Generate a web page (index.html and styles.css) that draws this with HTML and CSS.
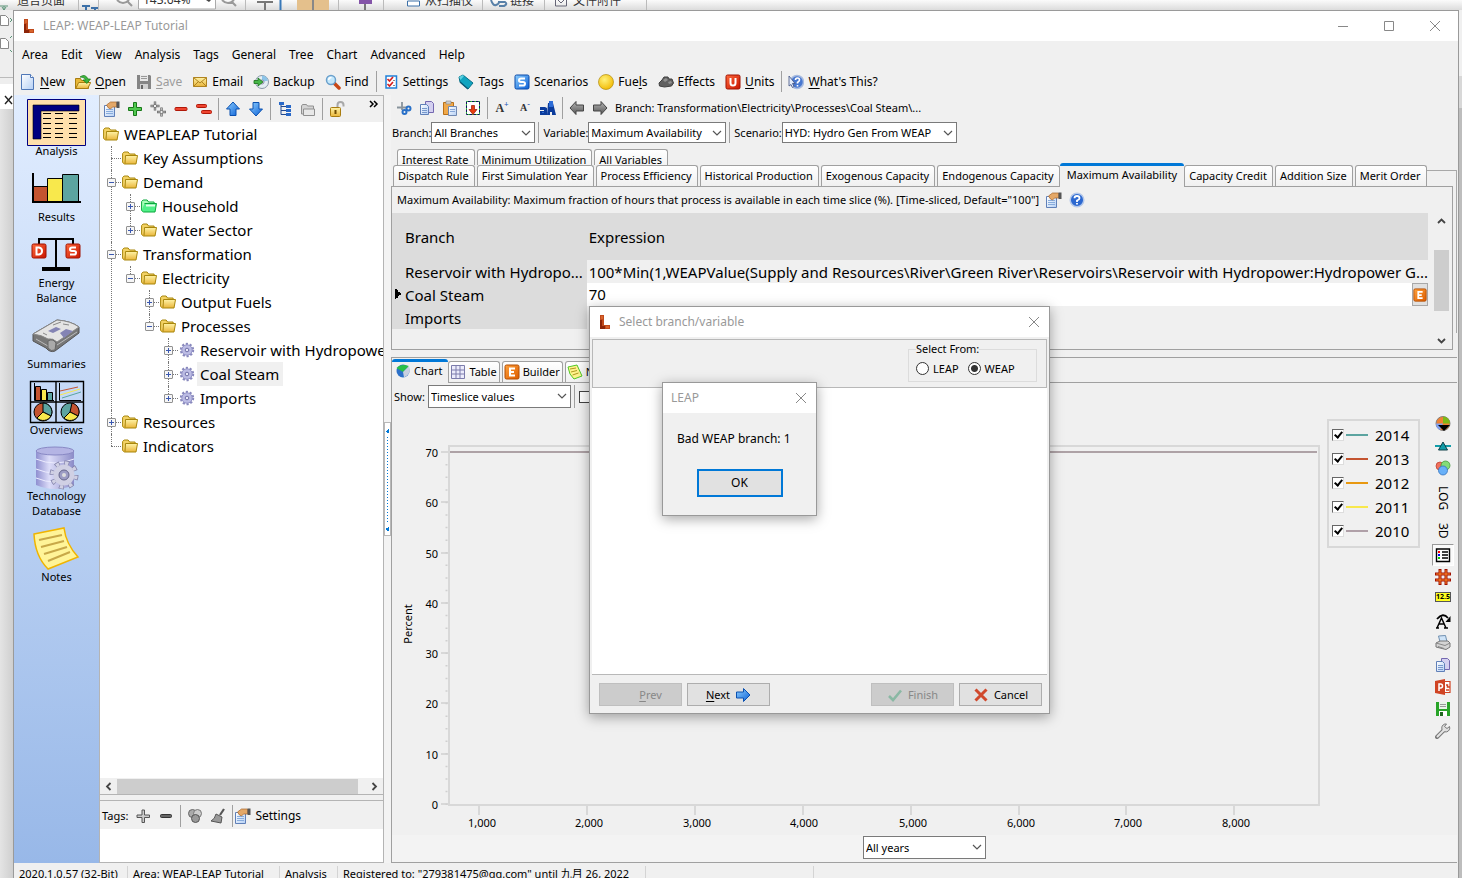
FILE: index.html
```html
<!DOCTYPE html>
<html lang="en">
<head>
    <meta charset="UTF-8">
    <meta name="viewport" content="width=device-width, initial-scale=1.0">
    <title>LEAP: WEAP-LEAP Tutorial</title>
    <link rel="stylesheet" href="styles.css">
</head>
<body>
    <!-- Icon sprite -->
    <svg class="sprite" aria-hidden="true">
        <defs>
            <linearGradient id="gold" x1="0" y1="0" x2="0" y2="1"><stop offset="0" stop-color="#fff3a6"/><stop offset="1" stop-color="#e9b53a"/></linearGradient>
            <linearGradient id="blue" x1="0" y1="0" x2="1" y2="1"><stop offset="0" stop-color="#8fd0ff"/><stop offset="1" stop-color="#0a5fd6"/></linearGradient>
            <linearGradient id="paper" x1="0" y1="0" x2="1" y2="1"><stop offset="0" stop-color="#fff"/><stop offset="1" stop-color="#b5d0f5"/></linearGradient>
            <linearGradient id="grey" x1="0" y1="0" x2="0" y2="1"><stop offset="0" stop-color="#b5b5b5"/><stop offset="1" stop-color="#555"/></linearGradient>
            <linearGradient id="red" x1="0" y1="0" x2="1" y2="1"><stop offset="0" stop-color="#ff6a3c"/><stop offset="1" stop-color="#c81400"/></linearGradient>
            <linearGradient id="orange" x1="0" y1="0" x2="1" y2="1"><stop offset="0" stop-color="#ffa23c"/><stop offset="1" stop-color="#dc5c00"/></linearGradient>
            <linearGradient id="lilac" x1="0" y1="0" x2="1" y2="0"><stop offset="0" stop-color="#8f8fd0"/><stop offset=".35" stop-color="#dcdcf8"/><stop offset="1" stop-color="#8c8cc8"/></linearGradient>
            <radialGradient id="sun" cx=".4" cy=".35" r=".7"><stop offset="0" stop-color="#fff27a"/><stop offset="1" stop-color="#f2b800"/></radialGradient>
        </defs>
        <symbol id="i-leap" viewBox="0 0 16 16"><path d="M3 1h4v10h6v4H3z" fill="#c04a1c"/><path d="M3 6h2v6h3v3H3z" fill="#8c2408"/><path d="M4 2h2v3H4zM9 12h3v2H9z" fill="#d8642c"/></symbol>
        <symbol id="i-new" viewBox="0 0 16 16"><path d="M1.500.5h9l3 3v12h-12z" fill="url(#paper)" stroke="#5078b8"/><path d="M10.500.5v3h3" fill="#fff" stroke="#5078b8"/></symbol>
        <symbol id="i-open" viewBox="0 0 16 16"><path d="M.5 14.500V4.500h5l1 2h7v8z" fill="#e8b838" stroke="#a87c10"/><path d="M.7 14.500l3-6h12l-3 6z" fill="url(#gold)" stroke="#a87c10"/><path d="M5 3q5-4 8 2h2.500L12 9.500 8 6h2.500Q9 2.500 5 3z" fill="#3cb43c" stroke="#147814" stroke-width=".7"/></symbol>
        <symbol id="i-save" viewBox="0 0 16 16"><path d="M1 1h13l1 1v13H1z" fill="#858585"/><path d="M4 1h8v6H4z" fill="#e8e8e8"/><path d="M5 2.500h6M5 4.500h6" stroke="#999"/><path d="M4 10h8v5H4z" fill="#d0d0d0"/><path d="M5 11h2v4H5z" fill="#666"/></symbol>
        <symbol id="i-email" viewBox="0 0 16 16"><path d="M1.500 3.500h13v9h-13z" fill="url(#gold)" stroke="#b08420"/><path d="M1.500 3.500L8 9l6.500-5.500M1.500 12.500l5-5M14.500 12.500l-5-5" fill="none" stroke="#b08420"/></symbol>
        <symbol id="i-backup" viewBox="0 0 16 16"><circle cx="9" cy="8" r="6.500" fill="#e4eef4" stroke="#8898a8"/><path d="M9 1.500a6.500 6.500 0 016 5L9 8z" fill="#8cc4e8"/><circle cx="9" cy="8" r="2" fill="#fff" stroke="#88a"/><path d="M1 6.500h4V4l5 4-5 4V9.500H1z" fill="#48b848" stroke="#187018" stroke-width=".8"/></symbol>
        <symbol id="i-find" viewBox="0 0 16 16"><path d="M9 9l5 5" stroke="#c84818" stroke-width="3.500" stroke-linecap="round"/><circle cx="6" cy="6" r="4.500" fill="#c4e8fc" stroke="#6aa0cc" stroke-width="1.500"/><path d="M3.500 6Q4 3.500 6.500 3.500" fill="none" stroke="#fff" stroke-width="1.300"/></symbol>
        <symbol id="i-settings" viewBox="0 0 16 16"><path d="M3 2h10.500v12H3z" fill="#fff" stroke="#2080d8" stroke-width="1.500"/><path d="M4.500 5L6.500 7 10 3M4.500 10l2 2L10 8" fill="none" stroke="#d82020" stroke-width="1.700"/><path d="M10 6.500h2M10 11.500h2" stroke="#888"/></symbol>
        <symbol id="i-tag" viewBox="0 0 16 16"><path d="M1 3l4-2 10 8-5 6L2 8z" fill="#10a4c0" stroke="#087088"/><path d="M1 3l4-2 1 1-3.500 4z" fill="#5cd0e0"/><path d="M2 8l8 7" stroke="#0c5c78" stroke-width="1.500"/></symbol>
        <symbol id="i-scen" viewBox="0 0 16 16"><rect x="1" y="1" width="14" height="14" rx="1.500" fill="url(#blue)" stroke="#0848a8"/><path d="M11 4.500H7Q5 4.500 5 6.200T7 8h2q2 0 2 1.800T9 11.500H5" fill="none" stroke="#fff" stroke-width="2"/></symbol>
        <symbol id="i-sun" viewBox="0 0 16 16"><circle cx="8" cy="8" r="7.500" fill="url(#sun)" stroke="#b08c10" stroke-width=".7"/></symbol>
        <symbol id="i-coal" viewBox="0 0 16 16"><path d="M1 9l3-3 2-3h4l1 2h3l1.500 4-2 3-7 1-5-1z" fill="#606060" stroke="#404040"/><path d="M5 6l3-2 2 2-3 2zM10 8l3-1 1 2-3 1z" fill="#909090"/></symbol>
        <symbol id="i-units" viewBox="0 0 16 16"><rect x="1" y="1" width="14" height="14" rx="1.500" fill="url(#red)" stroke="#a01000"/><path d="M5.500 4v5q0 2.500 2.500 2.500T10.500 9V4" fill="none" stroke="#fff" stroke-width="2"/></symbol>
        <symbol id="i-d" viewBox="0 0 16 16"><rect x="1" y="1" width="14" height="14" rx="1.500" fill="url(#red)" stroke="#a01000"/><path d="M5.500 4.500H8Q11 5 11 8t-3 3.500H5.500z" fill="none" stroke="#fff" stroke-width="2"/></symbol>
        <symbol id="i-s" viewBox="0 0 16 16"><rect x="1" y="1" width="14" height="14" rx="1.500" fill="url(#red)" stroke="#a01000"/><path d="M11 4.500H7Q5 4.500 5 6.200T7 8h2q2 0 2 1.800T9 11.500H5" fill="none" stroke="#fff" stroke-width="2"/></symbol>
        <symbol id="i-builder" viewBox="0 0 16 16"><rect x="1" y="1" width="14" height="14" rx="1.500" fill="url(#orange)" stroke="#b44c00"/><path d="M11 4.500H6v7h5M6 8h4" fill="none" stroke="#fff" stroke-width="2"/></symbol>
        <symbol id="i-what" viewBox="0 0 16 16"><circle cx="9" cy="8" r="6.500" fill="#4878d0" stroke="#a8bce0" stroke-width="1.500"/><path d="M7.500 6q0-2 2-2t2 2q0 1-2 2.500V9.500M9.500 11v1.500" fill="none" stroke="#fff" stroke-width="1.600"/><path d="M1 2v10l2-1.500 1.500 3 1.500-1L4.500 9.500H7z" fill="#e4ecfa" stroke="#405080" stroke-width=".8"/></symbol>
        <symbol id="i-help" viewBox="0 0 16 16"><circle cx="8" cy="8" r="6.800" fill="#2c68d0" stroke="#b4c8ea" stroke-width="1.500"/><path d="M5.500 6.200Q5.500 4 8 4t2.500 2.200Q10.500 7.500 8 8.500V10M8 11v1.500" fill="none" stroke="#fff" stroke-width="1.800"/></symbol>
        <symbol id="i-props" viewBox="0 0 16 16"><path d="M.5 4.500h10v11H.5z" fill="url(#paper)" stroke="#6080b8"/><path d="M2 8.500h7M2 10.500h7M2 12.500h7" stroke="#88acdc"/><path d="M2.500 4l4-3h6v5H8.500L6.500 8l-2-1z" fill="#e4a868" stroke="#a86428" stroke-width=".7"/><path d="M12.500.5h3v6.500h-3z" fill="#555"/></symbol>
        <symbol id="i-plus" viewBox="0 0 16 16"><path d="M6.500 1.500h3v5h5v3h-5v5h-3v-5h-5v-3h5z" fill="#50c850" stroke="#187818"/></symbol>
        <symbol id="i-plus2" viewBox="0 0 16 16"><path d="M5 .5v3.500M5 6v3.500M.5 5H4M6 5h3.500M11.500 6.500V10M11.500 12v3.500M7 11h3.500M12.500 11H16" stroke="#666" stroke-width="2.400"/><path d="M5 1v2.500M5 6.500V9M1 5h2.500M6.500 5H9M11.500 7v2.500M11.500 12.500V15M7.500 11H10M13 11h2.500" stroke="#ccc" stroke-width=".8"/></symbol>
        <symbol id="i-minus" viewBox="0 0 16 16"><rect x="2" y="6.500" width="12" height="3" rx="1" fill="#ee4430" stroke="#b01808"/></symbol>
        <symbol id="i-minus2" viewBox="0 0 16 16"><rect x=".5" y="3.500" width="10" height="3" rx="1" fill="#ee4430" stroke="#b01808"/><rect x="5.500" y="9.500" width="10" height="3" rx="1" fill="#ee4430" stroke="#b01808"/></symbol>
        <symbol id="i-up" viewBox="0 0 16 16"><path d="M8 1l6.500 7H11v6.500H5V8H1.500z" fill="url(#blue)" stroke="#0a50b0"/></symbol>
        <symbol id="i-down" viewBox="0 0 16 16"><path d="M8 15l6.500-7H11V1.500H5V8H1.500z" fill="url(#blue)" stroke="#0a50b0"/></symbol>
        <symbol id="i-next" viewBox="0 0 16 16"><path d="M15 8L8.500 1.500V5h-7v6h7v3.500z" fill="url(#blue)" stroke="#0a50b0"/></symbol>
        <symbol id="i-tree" viewBox="0 0 16 16"><path d="M4 4v9.500h5M4 9.500h5M4 5.500h5" fill="none" stroke="#204890"/><path d="M2 1h5v3H2zM9 4h5v3H9zM9 8h5v3H9zM9 12h5v3H9z" fill="#2868c8"/></symbol>
        <symbol id="i-gfold" viewBox="0 0 16 16"><path d="M1.500 13V5l1-1.500h4l1 1.500h6v8z" fill="#d4d4d4" stroke="#909090"/><path d="M3.500 14.500V8h11v6.500z" fill="#e8e8e8" stroke="#909090"/></symbol>
        <symbol id="i-lock" viewBox="0 0 16 16"><path d="M8.500 7V4q0-3 3-3t3 3v1.500" fill="none" stroke="#a8a8a8" stroke-width="2"/><rect x="1.500" y="6.500" width="10" height="9" rx="1" fill="url(#gold)" stroke="#a87c10"/><path d="M6.500 9v4" stroke="#704c00" stroke-width="2"/></symbol>
        <symbol id="i-folder" viewBox="0 0 16 16"><path d="M.6 12.500V3.500l1.500-1.500h4l1.500 2h5.500v9" fill="#f3d264" stroke="#a8860c"/><path d="M3.500 5.500h12L14 14H2.500L.6 12.500" fill="url(#gold)" stroke="#a8860c"/><path d="M3.500 5.500L3 13.500" stroke="#a8860c"/></symbol>
        <symbol id="i-gfolder" viewBox="0 0 16 16"><path d="M.6 12.500V3.500l1.500-1.500h4l1.500 2h5.500v9" fill="#a8ffb8" stroke="#0aa83c"/><path d="M3.500 5.500h12L14 14H2.500L.6 12.500" fill="#50f088" stroke="#0aa83c"/><path d="M5 7.500h9" stroke="#e0ffe8" stroke-width="2"/></symbol>
        <symbol id="i-gear" viewBox="0 0 16 16"><circle cx="8" cy="8" r="6" fill="none" stroke="#8888bc" stroke-width="2.400" stroke-dasharray="2.100 1.670"/><circle cx="8" cy="8" r="5.200" fill="#bcbce4" stroke="#9494c8"/><circle cx="8" cy="8" r="1.800" fill="#e8e8f8" stroke="#7070a8"/></symbol>
        <symbol id="i-cut" viewBox="0 0 16 16"><path d="M1 7.500h9M6 2v8" stroke="#88939c" stroke-width="1.800"/><circle cx="12.500" cy="8.500" r="2" fill="none" stroke="#2870c8" stroke-width="2"/><circle cx="8.500" cy="12" r="2" fill="none" stroke="#2870c8" stroke-width="2"/></symbol>
        <symbol id="i-copy" viewBox="0 0 16 16"><path d="M6.500 1.500h6l2 2v9h-8z" fill="#d4d0f0" stroke="#7468b0"/><path d="M1.500 4.500h6l2 2v8h-8z" fill="url(#paper)" stroke="#6080b8"/><path d="M3 8.500h5M3 10.500h5M3 12.500h5" stroke="#7898cc"/></symbol>
        <symbol id="i-paste" viewBox="0 0 16 16"><path d="M1.500 2.500h10v12h-10z" fill="#f0a848" stroke="#b87018"/><path d="M4 1h5v3H4z" fill="#ccc" stroke="#888" stroke-width=".6"/><path d="M6.500 6.500h8v9h-8z" fill="url(#paper)" stroke="#7088b0"/><path d="M8 9.500h5M8 11.500h5" stroke="#88a8d8"/></symbol>
        <symbol id="i-import" viewBox="0 0 16 16"><path d="M1.500 1.500h13v13h-13z" fill="#fff" stroke="#101060"/><path d="M1.500 1.500h13v13h-13z" fill="none" stroke="#30c830" stroke-dasharray="1.500 2.500"/><path d="M6.500 5.500h3v4H12l-4 5-4-5h2.500z" fill="#e83c10" stroke="#901800" stroke-width=".7"/></symbol>
        <symbol id="i-left" viewBox="0 0 16 16"><path d="M1 8l6-6.500V5h7.500v6H7v3.500z" fill="url(#grey)" stroke="#444"/></symbol>
        <symbol id="i-right" viewBox="0 0 16 16"><path d="M15 8L9 1.500V5H1.500v6H9v3.500z" fill="url(#grey)" stroke="#444"/></symbol>
        <symbol id="i-gplus" viewBox="0 0 16 16"><path d="M7 2h2.500v5h5v2.500h-5v5H7v-5H2V7h5z" fill="#ccc" stroke="#555"/></symbol>
        <symbol id="i-gminus" viewBox="0 0 16 16"><rect x="2.500" y="6.500" width="11" height="3" rx="1" fill="#666" stroke="#333"/></symbol>
        <symbol id="i-blob" viewBox="0 0 16 16"><circle cx="5.500" cy="5.500" r="4" fill="#aaa" stroke="#666"/><circle cx="10.500" cy="5.500" r="4" fill="#ccc" stroke="#777"/><circle cx="8.500" cy="10.500" r="4" fill="#999" stroke="#555"/></symbol>
        <symbol id="i-broom" viewBox="0 0 16 16"><path d="M14 1l-4 6" stroke="#555" stroke-width="2.200"/><path d="M6 6l6 3-1 6-10-2q4-2 5-7z" fill="#999" stroke="#555"/></symbol>
        <symbol id="i-chart" viewBox="0 0 16 16"><circle cx="8" cy="8" r="6.500" fill="#2c70c8"/><path d="M8 9L1.500 5Q6 0 14 3z" fill="#28c048"/><path d="M8 9l6-6q3 8-5 11.500z" fill="#c8d0e0"/></symbol>
        <symbol id="i-table" viewBox="0 0 16 16"><path d="M1.500 1.500h13v13h-13zM1.500 6h13M1.500 10h13M6 1.500v13M10 1.500v13" fill="#ececfc" stroke="#7c7cac"/></symbol>
        <symbol id="i-note" viewBox="0 0 16 16"><path d="M1 3l9-2 5 11-8 3Q2 11 1 3z" fill="#fff48c" stroke="#50c828"/><path d="M3 5l6-1M4 8l6-1.500M5.500 11l6-2" stroke="#b09820"/></symbol>
        <symbol id="i-pie" viewBox="0 0 16 16"><circle cx="8" cy="7.500" r="7" fill="#f08030" stroke="#808080"/><path d="M8 7.500V.5a7 7 0 017 7z" fill="#7cb818"/><path d="M8 7.500H1a7 7 0 004 6.500z" fill="#80a0f0"/><path d="M3 9h12l-6 6z" fill="#000"/></symbol>
        <symbol id="i-base" viewBox="0 0 16 16"><path d="M0 8h16" stroke="#109ca8" stroke-width="2"/><path d="M8 4l4.500 8h-9z" fill="#109ca8" stroke="#104048"/></symbol>
        <symbol id="i-color" viewBox="0 0 16 16"><circle cx="5" cy="6" r="4" fill="#f0705c" stroke="#b83828" stroke-width=".7"/><circle cx="10.500" cy="5.500" r="4.500" fill="#84dc78" stroke="#389030" stroke-width=".7"/><circle cx="8" cy="10.500" r="4.500" fill="#68b0f8" stroke="#2868b8" stroke-width=".7"/></symbol>
        <symbol id="i-legend" viewBox="0 0 16 16"><path d="M1.500 2h13v12.500h-13z" fill="#fff" stroke="#000" stroke-width="1.400"/><path d="M7 5h6M7 8h6M7 11h6" stroke="#000" stroke-width="1.500"/><path d="M3 4h2v2H3z" fill="red"/><path d="M3 7h2v2H3z" fill="#00f"/><path d="M3 10h2v2H3z" fill="#0c0"/></symbol>
        <symbol id="i-grid" viewBox="0 0 16 16"><path d="M5 0v16M11 0v16M0 5h16M0 11h16" stroke="#a01000" stroke-width="3"/><path d="M5 1v14M11 1v14M1 5h14M1 11h14" stroke="#ff8828"/></symbol>
        <symbol id="i-rotA" viewBox="0 0 16 16"><path d="M2 15L6.500 5 11 15M4 11h5M1 15h3M9 15h4" stroke="#000" stroke-width="1.500" fill="none"/><path d="M2 6Q8-1 13 5" fill="none" stroke="#000" stroke-width="1.800"/><path d="M15.500 3v6h-5z"/></symbol>
        <symbol id="i-print" viewBox="0 0 16 16"><path d="M3.500 1l7-.5L12 7H5z" fill="#cfe4f8" stroke="#7090b0"/><path d="M1 8l4-2h8l2 2v4l-4 2.500L1 12z" fill="#d4d4d4" stroke="#777"/><path d="M1 8l9 2.500L15 8M3 11.500l6 2" fill="none" stroke="#888"/></symbol>
        <symbol id="i-ppt" viewBox="0 0 16 16"><path d="M0 2l10-2v16L0 14z" fill="#d04424"/><path d="M10 2.500h5v11h-5" fill="#fff" stroke="#d04424" stroke-width="1.200"/><path d="M4 12V5h1.500Q7.500 5 7.500 7T5.500 9H4" fill="none" stroke="#fff" stroke-width="1.500"/><path d="M11 6h1.500v2H15M11 11h3" fill="none" stroke="#d04424" stroke-width="1.500"/></symbol>
        <symbol id="i-gsave" viewBox="0 0 16 16"><path d="M1 1h14v14H1z" fill="#28a428"/><path d="M4 1h8v7H4z" fill="#e8f4e8"/><path d="M5 3.500h6M5 5.500h6" stroke="#999"/><path d="M4 10h8v5H4z" fill="#fff"/><path d="M5 11h3v4H5z" fill="#206820"/></symbol>
        <symbol id="i-wrench" viewBox="0 0 16 16"><path d="M2 14L9 7" stroke="#777" stroke-width="4" stroke-linecap="round"/><path d="M14.500 3.500a4 4 0 11-3-2.500L9.500 3.500l2.500 2z" fill="#ddd" stroke="#777"/><path d="M2.500 13.500L9 7" stroke="#e4e4e4" stroke-width="2" stroke-linecap="round"/></symbol>
        <symbol id="i-check" viewBox="0 0 16 16"><path d="M2 9l4 4L14 3.500" fill="none" stroke="#8ab8a4" stroke-width="2.600"/></symbol>
        <symbol id="i-x" viewBox="0 0 16 16"><path d="M2.500 2.500l11 11M13.500 2.500l-11 11" stroke="#d0482c" stroke-width="3"/></symbol>
        <symbol id="i-face" viewBox="0 0 16 16"><path d="M0 7h5l2 1v7H0v-4h4v-1H0zM8 3h5l3 12h-4v-3h-2v3H7z" fill="#0c3c9c"/><path d="M9 1h4v6H9zM2 12h2v1H2z" fill="#2c6cd8"/></symbol>
        <symbol id="i-close" viewBox="0 0 16 16"><path d="M3 3l10 10M13 3L3 13" stroke="#888" fill="none"/></symbol>
        <symbol id="i-chev" viewBox="0 0 10 10"><path d="M1 3l4 4 4-4" fill="none" stroke="#555" stroke-width="1.200"/></symbol>
    </svg>

    <!-- Window behind -->
    <div class="back-top">
        <svg width="660" height="10">
            <path d="M0 6h8M4 6v4M2 7l2 3 2-3" stroke="#5a9478" fill="none"/>
            <text x="17" y="5" class="back-text">适合页面</text>
            <path d="M78.500 0v10M98.500 0v10M245.500 0v10M338.500 0v10M383.500 0v10M482.500 0v10M544.500 0v10M646.500 0v10" stroke="#bbb"/>
            <path d="M82 6h8M86 6v4M91 8h7M95 8v2" stroke="#3c70a8" stroke-width="2"/>
            <path d="M117 0q6 6 12 0M128 2l4 4M222 0q6 6 12 0M232 2l4 4" stroke="#999" stroke-width="2" fill="none"/>
            <path d="M138.500 0v9h77V0" fill="#fff" stroke="#aaa"/>
            <text x="143" y="4" class="back-text">143.64%</text>
            <path d="M206 0h5l-2 2z" fill="#444"/>
            <path d="M257 2h16M265 2v8" stroke="#777" stroke-width="2"/>
            <path d="M280.500 0v10" stroke="#3878b8" stroke-width="2"/>
            <path d="M297 0h32v10h-32z" fill="#e4c08c"/>
            <path d="M313 0v10" stroke="#888" stroke-width="2"/>
            <path d="M359 0h13v4h-13z" fill="#8454a8"/>
            <path d="M365 4v6" stroke="#777" stroke-width="2"/>
            <path d="M407.500 2v-1h12v5h-12z" fill="#fff" stroke="#3c70a8"/>
            <text x="425" y="5" class="back-text">从扫描仪</text>
            <path d="M491 0q2 6 5 5t3-3h6q3 2-1 4h-5" fill="none" stroke="#5880a8" stroke-width="2"/>
            <text x="510" y="5" class="back-text">链接</text>
            <path d="M555.500 0v6h11V0M558 0l3 3 3-3" fill="none" stroke="#667"/>
            <text x="573" y="5" class="back-text">文件附件</text>
        </svg>
    </div>

    <div class="desk">
        <div class="back-left">
            <svg width="13" height="74"><path d="M.5 5.500h5l3 3v7h-8zM.5 28.500h5l3 3v7h-8z" fill="#fff" stroke="#888"/><path d="M10 8l2 2-2 2M10 28l2-2M10 40l2 2" stroke="#5a9478" fill="none"/><path d="M0 67.500h13" stroke="#bbb"/></svg>
            <span class="back-x"><svg class="ico"><path d="M5 6l7 8M12 6l-7 8" stroke="#222" stroke-width="1.400"/></svg></span>
        </div>

        <div class="window">
            <header class="titlebar">
                <svg class="ico"><use href="#i-leap"/></svg>
                <span class="title">LEAP: WEAP-LEAP Tutorial</span>
                <button class="cap" aria-label="Minimize"><svg class="ico" viewBox="0 0 16 16"><path d="M3 8.500h10" stroke="#888"/></svg></button>
                <button class="cap" aria-label="Maximize"><svg class="ico" viewBox="0 0 16 16"><path d="M3.500 3.500h9v9h-9z" fill="none" stroke="#888"/></svg></button>
                <button class="cap" aria-label="Close"><svg class="ico"><use href="#i-close"/></svg></button>
            </header>

            <nav class="menu">
                <button>Area</button><button>Edit</button><button>View</button><button>Analysis</button><button>Tags</button><button>General</button><button>Tree</button><button>Chart</button><button>Advanced</button><button>Help</button>
            </nav>

            <div class="toolbar">
                <button><svg class="ico"><use href="#i-new"/></svg><span><u>N</u>ew</span></button>
                <button><svg class="ico"><use href="#i-open"/></svg><span><u>O</u>pen</span></button>
                <button disabled><svg class="ico"><use href="#i-save"/></svg><span><u>S</u>ave</span></button>
                <button><svg class="ico"><use href="#i-email"/></svg>Email</button>
                <button><svg class="ico"><use href="#i-backup"/></svg>Backup</button>
                <button><svg class="ico"><use href="#i-find"/></svg>Find</button>
                <i class="sep"></i>
                <button><svg class="ico"><use href="#i-settings"/></svg>Settings</button>
                <button><svg class="ico"><use href="#i-tag"/></svg>Tags</button>
                <button><svg class="ico"><use href="#i-scen"/></svg>Scenarios</button>
                <button><svg class="ico"><use href="#i-sun"/></svg><span>Fue<u>l</u>s</span></button>
                <button><svg class="ico"><use href="#i-coal"/></svg>Effects</button>
                <button><svg class="ico"><use href="#i-units"/></svg><span><u>U</u>nits</span></button>
                <i class="sep"></i>
                <button><svg class="ico"><use href="#i-what"/></svg><span><u>W</u>hat's This?</span></button>
            </div>

            <div class="work">
                <aside class="views">
                    <button class="view">
                        <svg viewBox="0 0 59 48"><path d="M.5 1.500h58v46H.5z" fill="#ffe0ac" stroke="#000080"/><path d="M6 7h46v6H14v28H6z" fill="#000080" stroke="#000" stroke-width=".6"/><path d="M16 15.500h8M28 15.500h8M42 15.500h8M16 20.500h8M28 20.500h8M42 20.500h8M16 25.500h8M28 25.500h8M42 25.500h8M16 30.500h8M28 30.500h8M42 30.500h8M16 35.500h8M28 35.500h8M42 35.500h8M16 39.500h8M28 39.500h8M42 39.500h8" stroke="#000"/></svg>
                        Analysis
                    </button>
                    <button class="view">
                        <svg viewBox="0 0 59 48"><path d="M6.500 22.500h14v15h-14z" fill="#c45430" stroke="#000"/><path d="M20.500 14.500h15v23h-15z" fill="#f8e84c" stroke="#000"/><path d="M35.500 10.500h16v27h-16z" fill="#5ca4a0" stroke="#000"/><path d="M6 9v29h48" fill="none" stroke="#000" stroke-width="2"/></svg>
                        Results
                    </button>
                    <button class="view">
                        <svg viewBox="0 0 59 48"><path d="M12 14V9h34v5M29 9v29" fill="none" stroke="#000" stroke-width="2"/><path d="M15 37h28v4H15z"/><use href="#i-d" x="4" y="13" width="16" height="16"/><use href="#i-s" x="38" y="13" width="16" height="16"/></svg>
                        Energy<br>Balance
                    </button>
                    <button class="view">
                        <svg viewBox="0 0 59 48"><path d="M6 23L30 9q14 1 22 7v6L28 40q-5 2-9-3L6 30z" fill="#777" stroke="#555"/><path d="M6 23L30 9q14 1 22 7L30 31q-4-4-9-3-6-4-15-5z" fill="#e4e4e4" stroke="#888"/><path d="M9 28l12 7M30 34l20-13" fill="none" stroke="#bbb"/><path d="M21 30q5-3 8 2l-1 7q-4 2-7-2z" fill="#aaa" stroke="#666"/><path d="M21 20l8-4 5 2-8 4zM33 22l6-4 7 2-9 7z" fill="#8484b4"/><path d="M26 14l8-3M36 13l6 1M16 22l4 2" stroke="#888"/></svg>
                        Summaries
                    </button>
                    <button class="view">
                        <svg viewBox="0 0 59 48"><path d="M3.500 4.500h53v41h-53zM3.500 25h53M29 4.500v41" fill="none" stroke="#000" stroke-width="1.400"/><path d="M8.500 9.500h5v14h-5z" fill="#c45430" stroke="#000"/><path d="M14.500 12.500h5v11h-5z" fill="#f8e84c" stroke="#000"/><path d="M20.500 15.500h5v8h-5z" fill="#5ca4a0" stroke="#000"/><path d="M7.500 6v17.500H27M32.500 6v17.500H54" fill="none" stroke="#000"/><path d="M33 14l18-4" stroke="#c45430"/><path d="M33 18l20-6" stroke="#f8e84c"/><path d="M35 21l19-6" stroke="#5ca4a0"/><circle cx="16" cy="35" r="9" fill="#c45430" stroke="#000"/><path d="M16 35V26a9 9 0 018 13z" fill="#5ca4a0" stroke="#000"/><path d="M16 35l8 4a9 9 0 01-14 2z" fill="#f8e84c" stroke="#000"/><circle cx="43" cy="35" r="9" fill="#5ca4a0" stroke="#000"/><path d="M43 35l2-9a9 9 0 016 13z" fill="#c45430" stroke="#000"/><path d="M43 35l8 4a9 9 0 01-14 2z" fill="#f8e84c" stroke="#000"/></svg>
                        Overviews
                    </button>
                    <button class="view">
                        <svg viewBox="0 0 59 48"><path d="M9 8v34q19 8 38 0V8z" fill="url(#lilac)"/><ellipse cx="28" cy="8" rx="19" ry="4" fill="#b4b4e4" stroke="#8888c4"/><path d="M9 16q19 8 38 0M9 26q19 8 38 0M9 35q19 8 38 0" fill="none" stroke="#ececff"/><circle cx="37" cy="32" r="12" fill="none" stroke="#8080a8" stroke-width="5" stroke-dasharray="4.700 4.720"/><circle cx="37" cy="32" r="12" fill="none" stroke="#d0d0e4" stroke-width="3.400" stroke-dasharray="3.400 6.020" stroke-dashoffset="-.65"/><circle cx="37" cy="32" r="10.500" fill="#d0d0e4"/><circle cx="37" cy="32" r="5" fill="#9c9cc4" stroke="#66668c"/><circle cx="37" cy="32" r="2" fill="#ddd"/></svg>
                        Technology<br>Database
                    </button>
                    <button class="view">
                        <svg viewBox="0 0 59 48"><path d="M7 10L37 4q2 16 14 29L21 45Q8 32 7 10z" fill="#fff498" stroke="#f0b400" stroke-width="1.500"/><path d="M12 16l23-5M14 23l23-6M17 30l23-7M21 37l22-9" stroke="#c8a848" stroke-width="2"/></svg>
                        Notes
                    </button>
                </aside>

                <section class="branches">
                    <div class="iconbar">
                        <button aria-label="Properties"><svg class="ico"><use href="#i-props"/></svg></button>
                        <button aria-label="Add"><svg class="ico"><use href="#i-plus"/></svg></button>
                        <button aria-label="Add multiple"><svg class="ico"><use href="#i-plus2"/></svg></button>
                        <button aria-label="Delete"><svg class="ico"><use href="#i-minus"/></svg></button>
                        <button aria-label="Delete multiple"><svg class="ico"><use href="#i-minus2"/></svg></button>
                        <i class="sep"></i>
                        <button aria-label="Move up"><svg class="ico"><use href="#i-up"/></svg></button>
                        <button aria-label="Move down"><svg class="ico"><use href="#i-down"/></svg></button>
                        <i class="sep"></i>
                        <button aria-label="Outline"><svg class="ico"><use href="#i-tree"/></svg></button>
                        <button aria-label="Group"><svg class="ico"><use href="#i-gfold"/></svg></button>
                        <i class="sep"></i>
                        <button aria-label="Lock"><svg class="ico"><use href="#i-lock"/></svg></button>
                        <button class="more" aria-label="More"><svg width="10" height="8"><path d="M1 1l3 3-3 3M5 1l3 3-3 3" fill="none" stroke="#000" stroke-width="1.500"/></svg></button>
                    </div>

                    <div class="tree">
                        <div class="node"><svg class="ico"><use href="#i-folder"/></svg><span>WEAPLEAP Tutorial</span></div>
                        <ul class="top">
                            <li><div class="node"><i class="leaf"></i><svg class="ico"><use href="#i-folder"/></svg><span>Key Assumptions</span></div></li>
                            <li><div class="node"><i class="box"></i><svg class="ico"><use href="#i-folder"/></svg><span>Demand</span></div>
                                <ul>
                                    <li><div class="node"><i class="box closed"></i><svg class="ico"><use href="#i-gfolder"/></svg><span>Household</span></div></li>
                                    <li><div class="node"><i class="box closed"></i><svg class="ico"><use href="#i-folder"/></svg><span>Water Sector</span></div></li>
                                </ul>
                            </li>
                            <li><div class="node"><i class="box"></i><svg class="ico"><use href="#i-folder"/></svg><span>Transformation</span></div>
                                <ul>
                                    <li><div class="node"><i class="box"></i><svg class="ico"><use href="#i-folder"/></svg><span>Electricity</span></div>
                                        <ul>
                                            <li><div class="node"><i class="box closed"></i><svg class="ico"><use href="#i-folder"/></svg><span>Output Fuels</span></div></li>
                                            <li><div class="node"><i class="box"></i><svg class="ico"><use href="#i-folder"/></svg><span>Processes</span></div>
                                                <ul>
                                                    <li><div class="node"><i class="box closed"></i><svg class="ico"><use href="#i-gear"/></svg><span>Reservoir with Hydropower</span></div></li>
                                                    <li><div class="node"><i class="box closed"></i><svg class="ico"><use href="#i-gear"/></svg><span class="current">Coal Steam</span></div></li>
                                                    <li><div class="node"><i class="box closed"></i><svg class="ico"><use href="#i-gear"/></svg><span>Imports</span></div></li>
                                                </ul>
                                            </li>
                                        </ul>
                                    </li>
                                </ul>
                            </li>
                            <li><div class="node"><i class="box closed"></i><svg class="ico"><use href="#i-folder"/></svg><span>Resources</span></div></li>
                            <li><div class="node"><i class="leaf"></i><svg class="ico"><use href="#i-folder"/></svg><span>Indicators</span></div></li>
                        </ul>
                    </div>
                    <div class="hscroll">
                        <svg width="17" height="17"><path d="M10.500 5L7 8.500l3.500 3.500" fill="none" stroke="#444" stroke-width="1.800"/></svg>
                        <div class="hthumb"></div>
                        <svg width="17" height="17"><path d="M6.500 5L10 8.500 6.500 12" fill="none" stroke="#444" stroke-width="1.800"/></svg>
                    </div>
                    <div class="tagbar">
                        <span>Tags:</span>
                        <button aria-label="Add tag"><svg class="ico"><use href="#i-gplus"/></svg></button>
                        <button aria-label="Remove tag"><svg class="ico"><use href="#i-gminus"/></svg></button>
                        <i class="sep"></i>
                        <button aria-label="Colors"><svg class="ico"><use href="#i-blob"/></svg></button>
                        <button aria-label="Clear"><svg class="ico"><use href="#i-broom"/></svg></button>
                        <i class="sep"></i>
                        <button class="wide"><svg class="ico"><use href="#i-props"/></svg>Settings</button>
                    </div>
                    <div class="taglist"></div>
                </section>

                <div class="splitter">
                    <div class="grip"></div>
                </div>

                <main class="main">
                    <div class="iconbar">
                        <button aria-label="Cut"><svg class="ico"><use href="#i-cut"/></svg></button>
                        <button aria-label="Copy"><svg class="ico"><use href="#i-copy"/></svg></button>
                        <button aria-label="Paste"><svg class="ico"><use href="#i-paste"/></svg></button>
                        <button aria-label="Import"><svg class="ico"><use href="#i-import"/></svg></button>
                        <i class="sep"></i>
                        <button class="serif" aria-label="Larger">A<sup>+</sup></button>
                        <button class="serif small" aria-label="Smaller">A<sup>-</sup></button>
                        <button aria-label="Font"><svg class="ico"><use href="#i-face"/></svg></button>
                        <i class="sep"></i>
                        <button aria-label="Back"><svg class="ico"><use href="#i-left"/></svg></button>
                        <button aria-label="Forward"><svg class="ico"><use href="#i-right"/></svg></button>
                        <span class="path">Branch: Transformation\Electricity\Processes\Coal Steam\...</span>
                    </div>

                    <div class="filters">
                        <label for="branch">Branch:</label>
                        <span class="combo w-branch"><select id="branch"><option>All Branches</option></select><svg><use href="#i-chev"/></svg></span>
                        <i class="sep"></i>
                        <label for="variable">Variable:</label>
                        <span class="combo w-variable"><select id="variable"><option>Maximum Availability</option></select><svg><use href="#i-chev"/></svg></span>
                        <i class="sep"></i>
                        <label for="scenario">Scenario:</label>
                        <span class="combo w-scenario"><select id="scenario"><option>HYD: Hydro Gen From WEAP</option></select><svg><use href="#i-chev"/></svg></span>
                    </div>

                    <div class="variables">
                        <div class="tabs back">
                            <button>Interest Rate</button><button>Minimum Utilization</button><button>All Variables</button>
                        </div>
                        <div class="tabs">
                            <button>Dispatch Rule</button><button>First Simulation Year</button><button>Process Efficiency</button><button>Historical Production</button><button>Exogenous Capacity</button><button>Endogenous Capacity</button><button class="active">Maximum Availability</button><button>Capacity Credit</button><button>Addition Size</button><button>Merit Order</button>
                        </div>
                        <div class="pane">
                            <p class="hint">Maximum Availability: Maximum fraction of hours that process is available in each time slice (%). [Time-sliced, Default="100"]
                                <svg class="ico"><use href="#i-props"/></svg>
                                <svg class="ico"><use href="#i-help"/></svg>
                            </p>
                            <div class="sheet">
                                <table>
                                    <thead>
                                        <tr><th class="c-branch">Branch</th><th>Expression</th></tr>
                                    </thead>
                                    <tbody>
                                        <tr><th>Reservoir with Hydropo...</th><td>100*Min(1,WEAPValue(Supply and Resources\River\Green River\Reservoirs\Reservoir with Hydropower:Hydropower G...</td></tr>
                                        <tr class="editing"><th>Coal Steam</th><td><div class="cell">70<button class="build" aria-label="Expression builder"><svg class="ico"><use href="#i-builder"/></svg></button></div></td></tr>
                                        <tr><th>Imports</th><td></td></tr>
                                    </tbody>
                                </table>
                                <div class="vscroll">
                                    <svg width="15" height="17"><path d="M4 10l3.500-3.500L11 10" fill="none" stroke="#444" stroke-width="1.800"/></svg>
                                    <div class="vthumb"></div>
                                    <svg width="15" height="17"><path d="M4 7l3.500 3.500L11 7" fill="none" stroke="#444" stroke-width="1.800"/></svg>
                                </div>
                            </div>
                        </div>
                    </div>

                    <section class="output">
                        <div class="tabs low">
                            <button class="active"><svg class="ico"><use href="#i-chart"/></svg>Chart</button><button><svg class="ico"><use href="#i-table"/></svg>Table</button><button><svg class="ico"><use href="#i-builder"/></svg>Builder</button><button><svg class="ico"><use href="#i-note"/></svg>Notes</button>
                        </div>
                        <div class="show">
                            <label for="show">Show:</label>
                            <span class="combo w-show"><select id="show"><option>Timeslice values</option></select><svg><use href="#i-chev"/></svg></span>
                            <i class="sep"></i>
                            <input type="checkbox" class="tick" aria-label="Chart option">
                        </div>
                        <div class="plot">
                            <svg class="chart" width="930" height="425" viewBox="0 0 930 425">
                                <path d="M57 36h870v359H57z" fill="none" stroke="#d8d8d8" stroke-width="2"/>
                                <path d="M58 42h867" stroke="#aea2a6" stroke-width="2"/>
                                <path d="M49 42h7M49 92h7M49 143h7M49 193h7M49 243h7M49 293h7M49 344h7M49 394h7M87 396v9M195 396v9M303 396v9M411 396v9M519 396v9M627 396v9M734 396v9M842 396v9" stroke="#d8d8d8" stroke-width="2"/>
                                <path d="M54.500 54v341" fill="none" stroke="#d0d0d0" stroke-width="2" stroke-dasharray="1.500 11.070"/>
                                <g class="ylab"><text x="46" y="47">70</text><text x="46" y="97">60</text><text x="46" y="148">50</text><text x="46" y="198">40</text><text x="46" y="248">30</text><text x="46" y="298">20</text><text x="46" y="349">10</text><text x="46" y="399">0</text></g>
                                <g class="xlab"><text x="90" y="417">1,000</text><text x="197" y="417">2,000</text><text x="305" y="417">3,000</text><text x="412" y="417">4,000</text><text x="521" y="417">5,000</text><text x="629" y="417">6,000</text><text x="736" y="417">7,000</text><text x="844" y="417">8,000</text></g>
                                <text class="xlab" transform="translate(20 214) rotate(-90)">Percent</text>
                            </svg>
                            <div class="legend">
                                <label><input type="checkbox" class="tick" checked><i class="y2014"></i>2014</label>
                                <label><input type="checkbox" class="tick" checked><i class="y2013"></i>2013</label>
                                <label><input type="checkbox" class="tick" checked><i class="y2012"></i>2012</label>
                                <label><input type="checkbox" class="tick" checked><i class="y2011"></i>2011</label>
                                <label><input type="checkbox" class="tick" checked><i class="y2010"></i>2010</label>
                            </div>
                            <div class="tools">
                                <button aria-label="Chart type"><svg class="ico"><use href="#i-pie"/></svg></button>
                                <button aria-label="Baseline"><svg class="ico"><use href="#i-base"/></svg></button>
                                <button aria-label="Colors"><svg class="ico"><use href="#i-color"/></svg></button>
                                <button class="turned log">LOG</button>
                                <button class="turned">3D</button>
                                <button class="pressed" aria-label="Legend"><svg class="ico"><use href="#i-legend"/></svg></button>
                                <button aria-label="Grid"><svg class="ico"><use href="#i-grid"/></svg></button>
                                <button class="value">12.5</button>
                                <button aria-label="Rotate labels"><svg class="ico"><use href="#i-rotA"/></svg></button>
                                <button aria-label="Print"><svg class="ico"><use href="#i-print"/></svg></button>
                                <button aria-label="Copy chart"><svg class="ico"><use href="#i-copy"/></svg></button>
                                <button aria-label="PowerPoint"><svg class="ico"><use href="#i-ppt"/></svg></button>
                                <button aria-label="Save chart"><svg class="ico"><use href="#i-gsave"/></svg></button>
                                <button aria-label="Options"><svg class="ico"><use href="#i-wrench"/></svg></button>
                            </div>
                        </div>
                        <div class="years">
                            <span class="combo w-years"><select aria-label="Years"><option>All years</option></select><svg><use href="#i-chev"/></svg></span>
                        </div>
                    </section>
                </main>
            </div>

            <footer class="status">
                <span class="s-version">2020.1.0.57 (32-Bit)</span><span class="s-area">Area: WEAP-LEAP Tutorial</span><span class="s-view">Analysis</span><span class="s-user">Registered to: "279381475@qq.com" until 九月 26, 2022</span><span class="s-rest"></span>
            </footer>
        </div>

        <div class="back-right"></div>
    </div>

    <!-- Branch picker -->
    <div class="dialog picker" role="dialog" aria-label="Select branch/variable">
        <header class="titlebar">
            <svg class="ico"><use href="#i-leap"/></svg>
            <span class="title">Select branch/variable</span>
            <button class="cap" aria-label="Close"><svg class="ico"><use href="#i-close"/></svg></button>
        </header>
        <div class="source">
            <fieldset>
                <legend>Select From:</legend>
                <label><input type="radio" name="from">LEAP</label>
                <label><input type="radio" name="from" checked>WEAP</label>
            </fieldset>
        </div>
        <div class="choices"></div>
        <div class="actions">
            <button class="btn prev" disabled><span><u>P</u>rev</span></button>
            <button class="btn"><span><u>N</u>ext</span><svg class="ico"><use href="#i-next"/></svg></button>
            <button class="btn finish" disabled><svg class="ico"><use href="#i-check"/></svg>Finish</button>
            <button class="btn"><svg class="ico"><use href="#i-x"/></svg>Cancel</button>
        </div>
    </div>

    <!-- Error message -->
    <div class="dialog message" role="alertdialog" aria-label="LEAP">
        <header class="titlebar">
            <span class="title">LEAP</span>
            <button class="cap" aria-label="Close"><svg class="ico"><use href="#i-close"/></svg></button>
        </header>
        <p>Bad WEAP branch: 1</p>
        <button class="ok">OK</button>
    </div>
</body>
</html>
```

FILE: styles.css
```css
* {
    box-sizing: border-box;
}
body {
    margin: 0;
    height: 100vh;
    overflow: hidden;
    position: relative;
    font-family: "Noto Sans", "Noto Sans CJK SC", sans-serif;
    font-size: 12px;
    line-height: 16px;
    color: #000;
    background: #e0e0e0;
}
button, select, input {
    font: inherit;
    color: inherit;
    margin: 0;
}
button {
    background: none;
    border: 0;
    padding: 0;
    white-space: nowrap;
}
svg {
    display: block;
    flex: none;
}
u {
    text-underline-offset: 2px;
}
.sprite {
    position: absolute;
    width: 0;
    height: 0;
}
.ico {
    width: 16px;
    height: 16px;
}
.sep {
    width: 1px;
    align-self: stretch;
    background: #a0a0a0;
    flex: none;
}

/* Window behind */
.back-top {
    height: 10px;
    overflow: hidden;
    background: linear-gradient(#fbfbfb, #dcdcdc);
}
.back-text {
    font-size: 12px;
    fill: #333;
}
.desk {
    display: flex;
    height: calc(100vh - 3px);
}
.back-left {
    width: 13px;
    flex: none;
    background: linear-gradient(to right, #e4e4e4, #cfcfcf);
}
.back-left > svg {
    background: #eee;
}
.back-x {
    display: block;
    height: 25px;
    padding-top: 6px;
    overflow: hidden;
    background: #fff;
}
.back-right {
    width: 3px;
    flex: none;
    background: linear-gradient(#f0f0f0 66px, #d8d8d8 66px, #d8d8d8 98px, #bdbdbd 98px);
}

/* Main window */
.window {
    flex: 1;
    min-width: 0;
    display: flex;
    flex-direction: column;
    border: 1px solid #9a9a9a;
    background: #f0f0f0;
}
.titlebar {
    display: flex;
    align-items: center;
    height: 30px;
    padding-left: 7px;
    flex: none;
    background: #fff;
    color: #999;
}
.title {
    flex: 1;
    padding-left: 6px;
}
.cap {
    width: 46px;
    height: 30px;
    display: flex;
    align-items: center;
    justify-content: center;
}
.menu {
    display: flex;
    align-items: center;
    gap: 13px;
    height: 27px;
    padding-left: 8px;
    flex: none;
}
.toolbar {
    display: flex;
    align-items: center;
    gap: 10px;
    height: 27px;
    padding: 1px 6px;
    flex: none;
}
.toolbar button {
    display: flex;
    align-items: center;
    gap: 4px;
}
.toolbar button:disabled {
    color: #9c9c9c;
}
.toolbar .sep {
    margin: 2px -4px 2px -3px;
}
.work {
    flex: 1;
    min-height: 0;
    display: flex;
}

/* View bar */
.views {
    width: 85px;
    flex: none;
    display: flex;
    flex-direction: column;
    align-items: center;
    gap: 6px;
    padding-top: 3px;
    background: linear-gradient(#e1edff, #98b8e8);
}
.view {
    font-size: 11px;
    line-height: 15px;
    text-align: center;
}
.view svg {
    width: 59px;
    height: 48px;
    margin: 0 auto -3px;
}

/* Branch tree */
.branches {
    width: 285px;
    flex: none;
    display: flex;
    flex-direction: column;
    border: 1px solid #b4b4b4;
    background: #f0f0f0;
}
.iconbar {
    display: flex;
    align-items: center;
    gap: 7px;
    height: 26px;
    padding: 2px 4px;
    flex: none;
}
.iconbar .sep {
    margin: 0 -1px;
}
.more {
    margin: 2px 0 0 auto;
    align-self: flex-start;
}
.tree {
    flex: 1;
    min-height: 0;
    overflow: hidden;
    padding-left: 3px;
    background: #fff;
    font-size: 15px;
}
.tree ul {
    list-style: none;
    margin: 0 0 0 19px;
    padding: 0;
}
.tree .top {
    margin-left: 4px;
}
.tree li {
    position: relative;
}
.tree li::before {
    content: "";
    position: absolute;
    left: 4px;
    top: 0;
    bottom: 0;
    border-left: 1px dotted #777;
}
.tree li:last-child::before {
    bottom: auto;
    height: 12px;
}
.tree li::after {
    content: "";
    position: absolute;
    left: 4px;
    top: 12px;
    width: 10px;
    border-top: 1px dotted #777;
}
.node {
    display: flex;
    align-items: center;
    height: 24px;
    white-space: nowrap;
    line-height: 24px;
}
.node span {
    padding: 0 5px;
}
.node .current {
    margin-left: 2px;
    padding: 0 4px 0 3px;
    background: #f0f0f0;
}
.leaf {
    flex: none;
    width: 9px;
    margin-right: 6px;
}
.box {
    position: relative;
    z-index: 1;
    flex: none;
    width: 9px;
    height: 9px;
    margin-right: 6px;
    border: 1px solid #919191;
    border-radius: 1px;
    background: linear-gradient(#3a58b0, #3a58b0) center / 5px 1px no-repeat #f6f6f6;
}
.closed {
    background: linear-gradient(#3a58b0, #3a58b0) center / 5px 1px no-repeat, linear-gradient(#3a58b0, #3a58b0) center / 1px 5px no-repeat, #f6f6f6;
}
.hscroll {
    display: flex;
    height: 17px;
    background: #f0f0f0;
    border-bottom: 1px solid #b4b4b4;
}
.hthumb {
    flex: 1;
    height: 15px;
    margin: 1px 8px 0 0;
    background: #cdcdcd;
}
.tagbar {
    display: flex;
    align-items: center;
    gap: 7px;
    height: 29px;
    margin-top: 5px;
    padding: 4px 2px 2px;
    border-top: 1px solid #b4b4b4;
    font-size: 11px;
}
.tagbar .sep {
    margin: 0 -1px;
}
.tagbar .wide {
    display: flex;
    align-items: center;
    gap: 4px;
    margin-left: -4px;
    font-size: 12px;
}
.taglist {
    height: 33px;
    background: #fff;
}
.splitter {
    width: 7px;
    flex: none;
    padding-top: 327px;
    background: #f3f3f3;
}
.grip {
    height: 114px;
    border: 1px solid #b8b8b8;
    background:
        linear-gradient(135deg, transparent 50%, #0078d7 50%) 1px 5px / 3px 3px no-repeat,
        linear-gradient(45deg, transparent 50%, #0078d7 50%) 1px 8px / 3px 3px no-repeat,
        linear-gradient(135deg, transparent 50%, #0078d7 50%) 1px 103px / 3px 3px no-repeat,
        linear-gradient(45deg, transparent 50%, #0078d7 50%) 1px 106px / 3px 3px no-repeat,
        repeating-linear-gradient(#0078d7 0 1px, transparent 1px 3px) 2px 14px / 1px 86px no-repeat,
        #fff;
}

/* Right side */
.main {
    flex: 1;
    min-width: 0;
    display: flex;
    flex-direction: column;
}
.main > .iconbar {
    padding-left: 5px;
}
.serif {
    width: 16px;
    font-family: "Liberation Serif", serif;
    font-weight: bold;
    color: #333;
}
.serif sup {
    font-size: 8px;
    line-height: 8px;
    color: #2858b8;
}
.small {
    font-size: 10px;
}
.path {
    font-size: 11px;
}
.filters {
    display: flex;
    align-items: center;
    height: 23px;
    padding: 1px;
    font-size: 11px;
    flex: none;
}
.filters .sep {
    margin: 0 4px 0 3px;
}
.filters label {
    white-space: nowrap;
}
.combo {
    position: relative;
    display: block;
    height: 21px;
    font-size: 11px;
}
.combo select {
    width: 100%;
    height: 100%;
    appearance: none;
    padding: 0 2px;
    border: 1px solid #7a7a7a;
    border-radius: 0;
    background: #fff;
}
.combo svg {
    position: absolute;
    right: 4px;
    top: 6px;
    width: 10px;
    height: 10px;
}
.w-branch { width: 104px; }
.w-variable { width: 138px; }
.w-scenario { width: 175px; }
.w-show { width: 143px; height: 23px; }
.w-years { width: 123px; height: 23px; }

.variables {
    display: flex;
    flex-direction: column;
    padding: 5px 5px 0 0;
    flex: none;
    background:
        linear-gradient(#a8a8a8, #a8a8a8) right 1px top 26px / 100% 1px no-repeat,
        linear-gradient(#a8a8a8, #a8a8a8) right 1px top 26px / 1px 163px no-repeat;
}
.tabs {
    display: flex;
    align-items: flex-end;
    gap: 2px;
    height: 21px;
    padding-left: 2px;
    font-size: 11px;
    background: #f0f0f0;
    align-self: flex-start;
}
.tabs button {
    height: 21px;
    padding: 0 5px 0 4px;
    border: 1px solid #a0a0a0;
    border-bottom: 0;
    border-radius: 3px 3px 0 0;
    background: linear-gradient(#fff, #f0f0f0);
}
.tabs .active {
    height: 24px;
    padding: 0 7px 3px;
    margin: 0 -2px -1px;
    border: 0;
    border-top: 3px solid #0078d7;
    background: #f0f0f0;
    z-index: 1;
}
.tabs.back {
    height: 16px;
    padding-left: 6px;
    align-items: flex-start;
    overflow: hidden;
}
.pane {
    height: 164px;
    border: 1px solid #a0a0a0;
}
.hint {
    display: flex;
    align-items: center;
    gap: 7px;
    height: 26px;
    margin: 0;
    padding-left: 5px;
    white-space: nowrap;
    font-size: 11px;
}
.sheet {
    display: flex;
    gap: 6px;
    height: 136px;
    padding-right: 3px;
}
.sheet table {
    flex: 1;
    min-width: 0;
    height: 116px;
    table-layout: fixed;
    border-collapse: collapse;
    font-size: 15px;
    line-height: 22px;
}
.sheet thead {
    background: #dcdcdc;
}
.sheet thead tr {
    height: 47px;
}
.sheet tbody tr {
    height: 23px;
}
.sheet th, .sheet td {
    padding: 0 0 0 2px;
    text-align: left;
    font-weight: normal;
    white-space: nowrap;
    overflow: hidden;
}
.sheet th:first-child {
    padding-left: 13px;
    background: #dcdcdc;
}
.sheet .c-branch {
    width: 195px;
}
.sheet .editing th {
    background: linear-gradient(to bottom left, transparent 50%, #000 50%) 3px 11px / 0 0 no-repeat, linear-gradient(to bottom right, #000 50%, transparent 50%) 3px 11px / 6px 6px no-repeat, linear-gradient(to top right, #000 50%, transparent 50%) 3px 5px / 6px 6px no-repeat, #dcdcdc;
}
.editing td {
    background: #fff;
}
.cell {
    display: flex;
    justify-content: space-between;
    height: 23px;
}
.build {
    border: 1px solid #a8a8a8;
    background: #e0e0e0;
}
.build .ico {
    width: 14px;
    height: 14px;
}
.vscroll {
    width: 15px;
    display: flex;
    flex-direction: column;
    background: #f0f0f0;
}
.vthumb {
    height: 61px;
    margin: 20px 0 auto;
    background: #cdcdcd;
}

/* Chart area */
.output {
    flex: 1;
    min-height: 0;
    display: flex;
    flex-direction: column;
    margin: 7px 1px 0 0;
    border: solid #a0a0a0;
    border-width: 1px 0 1px 1px;
}
.low {
    height: 25px;
    padding-left: 0;
    align-self: stretch;
    border-bottom: 1px solid #a0a0a0;
}
.low button, .low .active {
    display: flex;
    align-items: center;
    gap: 3px;
    padding-right: 2px;
    padding-left: 1px;
}
.low .active {
    padding-left: 3px;
    margin-left: 0;
    padding-right: 6px;
}
.show {
    display: flex;
    align-items: center;
    height: 27px;
    padding: 1px 2px;
    font-size: 11px;
}
.show .combo {
    margin-left: 3px;
}
.show .sep {
    margin: 1px 4px 1px 3px;
}
.tick {
    appearance: none;
    width: 12px;
    height: 12px;
    flex: none;
    border: 1px solid #444;
    background: #fff;
}
.tick:checked {
    border-color: #666 #ddd #ddd #666;
}
.tick:checked::before {
    content: "";
    display: block;
    width: 3px;
    height: 6px;
    margin: 0 0 0 3px;
    border: solid #000;
    border-width: 0 2px 2px 0;
    transform: rotate(40deg);
}
.plot {
    flex: 1;
    min-height: 0;
    display: flex;
    align-items: flex-start;
}
.chart {
    font-size: 11px;
}
.ylab {
    text-anchor: end;
}
.xlab {
    text-anchor: middle;
}
.legend {
    width: 93px;
    margin: 9px 0 0 5px;
    padding: 2px 2px 3px 3px;
    border: 2px solid #d8d8d8;
    font-size: 15px;
}
.legend label {
    display: flex;
    align-items: center;
    height: 24px;
}
.legend i {
    width: 22px;
    height: 2px;
    margin: 0 7px 0 2px;
}
.y2014 { background: #5ca4a0; }
.y2013 { background: #c45430; }
.y2012 { background: #e89810; }
.y2011 { background: #f8e84c; }
.y2010 { background: #b0a0a8; }
.tools {
    display: flex;
    flex-direction: column;
    align-items: center;
    margin: 3px 3px 0 auto;
}
.tools button {
    width: 22px;
    height: 22px;
    display: flex;
    align-items: center;
    justify-content: center;
}
.tools .turned {
    height: 27px;
    writing-mode: vertical-rl;
}
.tools .log {
    height: 38px;
}
.tools .pressed {
    border: 1px solid #999;
    border-right-color: #fff;
    border-bottom-color: #fff;
    background: #fafafa;
}
.tools .value {
    width: 16px;
    height: 10px;
    margin: 4px 0 8px;
    border: 1px solid #555;
    background: #ffff20;
    font-size: 7px;
    font-weight: bold;
}
.years {
    display: flex;
    justify-content: center;
    height: 27px;
    padding-top: 1px;
    background: #f3f3f3;
}

/* Status bar */
.status {
    display: flex;
    height: 21px;
    flex: none;
    padding-top: 3px;
    font-size: 11px;
    white-space: nowrap;
}
.status span {
    padding-left: 5px;
    border-right: 1px solid #d4d4d4;
}
.s-version { width: 114px; }
.s-area { width: 152px; }
.s-view { width: 58px; }
.s-user { width: 308px; }
.s-rest { width: 168px; }

/* Dialogs */
.dialog {
    position: absolute;
    border: 1px solid #999;
    background: #f0f0f0;
    box-shadow: 0 3px 12px rgba(0, 0, 0, 0.35);
}
.dialog .cap {
    width: 30px;
}
.picker {
    left: 589px;
    top: 306px;
    width: 461px;
    display: flex;
    flex-direction: column;
}
.source {
    display: flex;
    justify-content: flex-end;
    height: 49px;
    margin: 2px 2px 0;
    padding: 1px 9px 0 0;
    border: 1px solid #b8b8b8;
}
fieldset {
    display: flex;
    gap: 9px;
    width: 129px;
    height: 41px;
    margin: 0;
    padding: 0 7px 1px;
    border: 1px solid #dcdcdc;
    font-size: 11px;
}
legend {
    padding: 0;
}
fieldset label {
    display: flex;
    align-items: center;
    gap: 4px;
}
fieldset input {
    appearance: none;
    width: 13px;
    height: 13px;
    border: 1px solid #333;
    border-radius: 50%;
    background: #fff;
}
fieldset input:checked {
    background: radial-gradient(circle, #333 0 3px, #fff 4px);
}
.choices {
    height: 287px;
    margin: 0 2px;
    border-bottom: 1px solid #b8b8b8;
    background: #fff;
}
.actions {
    display: flex;
    gap: 5px;
    padding: 8px 7px 7px 9px;
}
.btn {
    display: flex;
    align-items: center;
    justify-content: center;
    gap: 5px;
    width: 83px;
    height: 23px;
    border: 1px solid #adadad;
    background: #e1e1e1;
    font-size: 11px;
}
.btn:disabled {
    border-color: #bfbfbf;
    background: #ccc;
    color: #888;
}
.prev {
    padding-left: 20px;
}
.finish {
    margin-left: auto;
}
.message {
    left: 662px;
    top: 382px;
    width: 155px;
    padding-bottom: 18px;
}
.message .titlebar {
    padding-left: 2px;
}
.message p {
    margin: 18px 0 22px 14px;
}
.ok {
    display: block;
    width: 86px;
    height: 28px;
    margin: 0 auto;
    border: 2px solid #0078d7;
    background: #e1e1e1;
}
```
